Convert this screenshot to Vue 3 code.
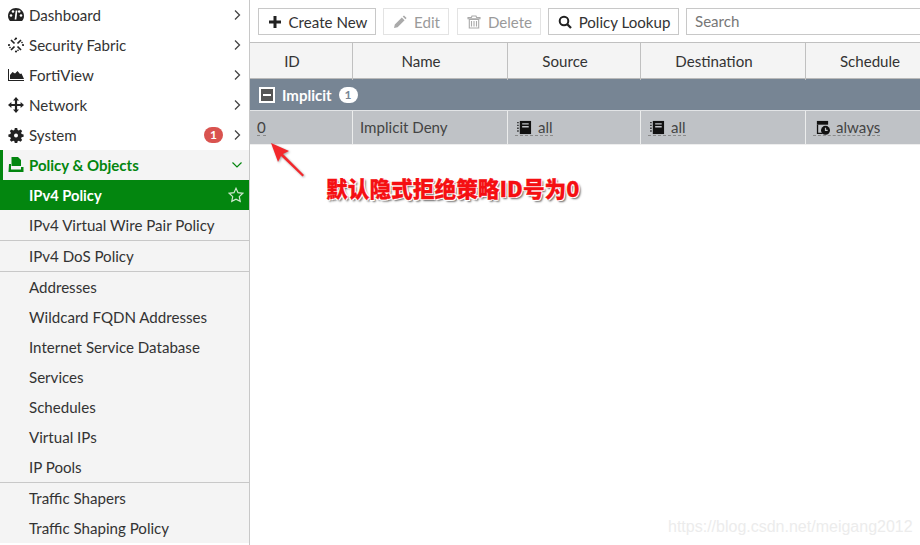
<script setup>
const top = [
  { label: 'Dashboard', icon: 'dash' },
  { label: 'Security Fabric', icon: 'fabric' },
  { label: 'FortiView', icon: 'view' },
  { label: 'Network', icon: 'net' },
  { label: 'System', icon: 'sys', badge: 1 }
]
const groups = [
  ['Addresses', 'Wildcard FQDN Addresses', 'Internet Service Database', 'Services', 'Schedules', 'Virtual IPs', 'IP Pools'],
  ['Traffic Shapers', 'Traffic Shaping Policy']
]
const cols = ['ID', 'Name', 'Source', 'Destination', 'Schedule']
</script>

<template>
  <div class="page">
    <aside class="side">
      <div v-for="t in top" :key="t.label" class="item">
        <svg class="ic" viewBox="0 0 16 16">
          <template v-if="t.icon === 'dash'">
            <path d="M8 1C3.600 1 0 4.500 0 9c0 2 .8 3.900 2 5h12c1.200-1.100 2-3 2-5 0-4.500-3.600-8-8-8z" fill="#222" />
            <circle cx="3" cy="8.500" r="1.300" fill="#fff" /><circle cx="5" cy="4.500" r="1.300" fill="#fff" /><circle cx="11.200" cy="4.500" r="1.300" fill="#fff" /><circle cx="13" cy="8.500" r="1.300" fill="#fff" />
            <path d="M7.500 12.500 L8.500 3.500" stroke="#fff" stroke-width="1.700" />
          </template>
          <template v-else-if="t.icon === 'fabric'">
            <path d="M3 3l3.500 3.500M13 3 9.500 6.500M3 13l3.500-3.500M13 13 9.500 9.500" stroke="#222" stroke-width="1.700" fill="none" />
            <path d="M6.500 2l1 1M9.500 12.800l1 1M1.500 10l1 1M13.500 5l1 1" stroke="#222" stroke-width="1.400" fill="none" />
            <circle cx="8" cy="1.500" r="1.100" fill="#222" /><circle cx="8" cy="14.500" r="1.100" fill="#222" /><circle cx="1" cy="8" r="1.100" fill="#222" /><circle cx="15" cy="8" r="1.100" fill="#222" />
          </template>
          <template v-else-if="t.icon === 'view'">
            <path d="M0 2h1v11h15v1H0z" fill="#222" />
            <path d="M2 12V8l2.500-3L7 6.500 9.500 4 12 7l1.500-.5L16 12z" fill="#222" />
          </template>
          <template v-else-if="t.icon === 'net'">
            <path d="M8 0l3 3.400H9.100v3.500h3.500V5l3.400 3-3.400 3V9.100H9.100v3.500H11L8 16l-3-3.400h1.900V9.100H3.400V11L0 8l3.400-3v1.900h3.500V3.400H5z" fill="#222" />
          </template>
          <template v-else>
            <path d="M6.800 1h2.400l.4 2 1.200.5 1.700-1.100 1.700 1.700-1.100 1.700.5 1.200 2 .4v2.400l-2 .4-.5 1.200 1.100 1.700-1.700 1.700-1.700-1.100-1.200.5-.4 2H6.800l-.4-2-1.200-.5-1.700 1.100-1.700-1.700 1.100-1.700-.5-1.200-2-.4V7.400l2-.4.500-1.200-1.100-1.700 1.700-1.700 1.700 1.100L6.400 3z" fill="#222" />
            <circle cx="8" cy="8.600" r="2" fill="#fff" />
          </template>
        </svg>
        <span class="lbl">{{ t.label }}</span>
        <span v-if="t.badge" class="badge">{{ t.badge }}</span>
        <svg class="chev" viewBox="0 0 8 12"><path d="M2 1.500 6.500 6 2 10.500" fill="none" stroke="#444" stroke-width="1.300" /></svg>
      </div>

      <div class="item section">
        <svg class="ic" viewBox="0 0 16 16">
          <path d="M3.500 0h6.500l3 3v6H3.500z" fill="#03860f" />
          <path d="M1 7h2v5.500h10V10h2.500v5H.5z" fill="#03860f" />
        </svg>
        <span class="lbl">Policy &amp; Objects</span>
        <svg class="chev down" viewBox="0 0 12 8"><path d="M1.500 1.500 6 6l4.500-4.500" fill="none" stroke="#03860f" stroke-width="1.200" /></svg>
      </div>
      <div class="sub active">
        <span class="lbl">IPv4 Policy</span>
        <svg class="star" viewBox="0 0 16 16"><path d="M8 1.300l2 4.400 4.800.6-3.500 3.300.9 4.800L8 12.100l-4.200 2.300.9-4.800L1.200 6.300 6 5.700z" fill="none" stroke="#cfe8d0" stroke-width="1.200" /></svg>
      </div>
      <div class="sub end">IPv4 Virtual Wire Pair Policy</div>
      <div class="sub end">IPv4 DoS Policy</div>
      <div v-for="(g, gi) in groups" :key="gi" class="grp">
        <div v-for="s in g" :key="s" class="sub">{{ s }}</div>
      </div>
    </aside>

    <main class="main">
      <div class="toolbar">
        <button class="btn create">
          <svg class="bi" viewBox="0 0 14 14"><path d="M5.500 1h3v4.500H13v3H8.500V13h-3V8.500H1v-3h4.500z" fill="#222" /></svg>Create New
        </button>
        <button class="btn off edit">
          <svg class="bi" viewBox="0 0 14 14"><path d="M1 13l.8-3.600 7-7 2.800 2.800-7 7zM9.700 1.600 11 .4l2.600 2.600-1.200 1.300z" fill="#aaa" /></svg>Edit
        </button>
        <button class="btn off del">
          <svg class="bi" viewBox="0 0 14 14"><path d="M5 1h4l.6 1.500H13v1.200H1V2.500h3.400zM2.300 4.500h9.400V13H2.300zM4.500 6v5.500M7 6v5.500M9.500 6v5.500" fill="#fff" stroke="#aaa" stroke-width="1.100" /></svg>Delete
        </button>
        <button class="btn look">
          <svg class="bi" viewBox="0 0 14 14"><circle cx="6" cy="6" r="4.300" fill="none" stroke="#222" stroke-width="2" /><path d="M9 9l4 4" stroke="#222" stroke-width="2.300" /></svg>Policy Lookup
        </button>
        <div class="search">Search</div>
      </div>

      <div class="tbl">
        <div class="row head">
          <div v-for="c in cols" :key="c" class="cell">{{ c }}</div>
        </div>
        <div class="group">
          <span class="minus"><i></i></span>
          <span class="gname">Implicit</span>
          <span class="count">1</span>
        </div>
        <div class="row data">
          <div class="cell"><span class="dash">0</span></div>
          <div class="cell">Implicit Deny</div>
          <div class="cell">
            <span class="dash">
              <svg class="ci" viewBox="0 0 16 16"><path d="M3 1h12v14H3z" fill="#111" /><path d="M5.500 3.500h7v1.400h-7zM5.500 6.500h7v1.400h-7z" fill="#bfc2c6" /><path d="M1 2v12" stroke="#111" stroke-width="1.400" stroke-dasharray="1.500 1.500" /></svg>all
            </span>
          </div>
          <div class="cell">
            <span class="dash">
              <svg class="ci" viewBox="0 0 16 16"><path d="M3 1h12v14H3z" fill="#111" /><path d="M5.500 3.500h7v1.400h-7zM5.500 6.500h7v1.400h-7z" fill="#bfc2c6" /><path d="M1 2v12" stroke="#111" stroke-width="1.400" stroke-dasharray="1.500 1.500" /></svg>all
            </span>
          </div>
          <div class="cell">
            <span class="dash">
              <svg class="ci" viewBox="0 0 16 16"><path d="M2 1h12v4H2z" fill="#111" /><path d="M2.700 5v9.300H8" fill="none" stroke="#111" stroke-width="1.400" /><circle cx="11.200" cy="11" r="4.800" fill="#111" /><path d="M11.200 8.300V11h2.300" fill="none" stroke="#bfc2c6" stroke-width="1.300" /></svg>always
            </span>
          </div>
        </div>
      </div>
    </main>

    <svg class="arrow" viewBox="0 0 60 60" width="60" height="60">
      <path fill="#f3282c" d="M1 1 L19 9 L13 12 L34 33 L32.500 34.500 L11 14 L8 20 Z" />
    </svg>
    <div class="note">默认隐式拒绝策略ID号为0</div>
    <div class="mark">https://blog.csdn.net/meigang2012</div>
  </div>
</template>

<style scoped>
.page {
  position: relative;
  width: 920px;
  height: 545px;
  display: flex;
  overflow: hidden;
  background: #fff;
  font-family: Lato, "Noto Sans CJK SC", sans-serif;
  font-size: 15.1px;
  color: #333;
}
.side {
  width: 250px;
  box-sizing: border-box;
  height: 545px;
  flex: none;
  border-right: 1px solid #c8c8c8;
  overflow: hidden;
}
.item {
  height: 30px;
  display: flex;
  align-items: center;
  padding: 0 8px;
  color: #333;
}
.ic {
  width: 16px;
  height: 16px;
  flex: none;
  margin-right: 5px;
}
.lbl { flex: 1; }
.chev {
  width: 8px;
  height: 12px;
  flex: none;
}
.chev.down {
  width: 12px;
  height: 8px;
  margin-right: -2px;
}
.badge {
  width: 19px;
  height: 16px;
  margin-right: 10px;
  border-radius: 8px;
  background: #d9534f;
  color: #fff;
  font-size: 12px;
  font-weight: 700;
  line-height: 16px;
  text-align: center;
}
.section {
  background: #f4f4f4;
  border-left: 3px solid #03860f;
  padding-left: 5px;
  color: #03860f;
  font-weight: 700;
  font-size: 15px;
}
.sub {
  height: 30px;
  line-height: 30px;
  padding-left: 29px;
  background: #f4f4f4;
  white-space: nowrap;
}
.sub.active {
  display: flex;
  align-items: center;
  padding-right: 5px;
  background: #03860f;
  color: #fff;
  font-weight: 700;
  font-size: 14.7px;
}
.star { width: 16px; height: 16px; flex: none; }
.sub.end {
  height: 31px;
  box-sizing: border-box;
  border-bottom: 1px solid #c8c8c8;
}
.grp {
  border-bottom: 1px solid #c8c8c8;
}
.grp:last-child { border-bottom: 0; }
.main {
  flex: 1;
  min-width: 0;
  overflow: hidden;
}
.toolbar {
  height: 42px;
  box-sizing: border-box;
  padding: 8px 0 0 8px;
  display: flex;
  align-items: flex-start;
}
.btn {
  flex: none;
  height: 27px;
  box-sizing: border-box;
  padding: 0 0 0 1px;
  display: flex;
  align-items: center;
  justify-content: center;
  background: #fff;
  border: 1px solid #c8c8c8;
  font: inherit;
  color: #333;
}
.bi { width: 14px; height: 14px; margin-right: 7px; }
.create { width: 118px; margin-right: 7px; }
.edit { width: 66px; margin-right: 8px; }
.del { width: 84px; margin-right: 7px; }
.look { width: 131px; margin-right: 7px; }
.off { border-color: #e3e3e3; color: #9a9a9a; }
.search {
  flex: none;
  width: 260px;
  height: 27px;
  box-sizing: border-box;
  border: 1px solid #c8c8c8;
  padding-left: 8px;
  line-height: 25px;
  color: #777;
}
.tbl { border-top: 1px solid #c0c0c0; }
.row {
  display: grid;
  grid-template-columns: 103px 155px 133px 165px 146px;
}
.head {
  height: 36px;
  background: #f4f4f4;
  border-bottom: 1px solid #b9b9b9;
  box-sizing: border-box;
}
.head .cell {
  line-height: 37px;
  padding-right: 18px;
  text-align: center;
  border-right: 1px solid #c0c0c0;
  color: #333;
}
.head .cell:last-child { border-right: 0; }
.group {
  height: 32px;
  box-sizing: border-box;
  display: flex;
  align-items: center;
  padding-left: 9px;
  background: #778594;
  border-bottom: 1px solid #e2e4e6;
  color: #fff;
  font-weight: 700;
  font-size: 15px;
}
.minus {
  width: 16px;
  height: 16px;
  box-sizing: border-box;
  border: 2px solid #fff;
  background: #555;
  display: flex;
  align-items: center;
  justify-content: center;
  margin-right: 7px;
}
.minus i {
  display: block;
  width: 8px;
  height: 2px;
  background: #fff;
}
.count {
  margin-left: 7px;
  width: 19px;
  height: 16px;
  border-radius: 8px;
  background: #fff;
  color: #778594;
  font-size: 12px;
  line-height: 16px;
  text-align: center;
}
.data {
  height: 33px;
  background: #bfc2c6;
  color: #444;
  border-bottom: 1px solid #eee;
}
.data .cell {
  box-sizing: border-box;
  height: 33px;
  padding-left: 7px;
  line-height: 33px;
  border-right: 1px solid #eceded;
}
.data .cell:last-child { border-right: 0; }
.dash {
  display: flex;
  width: fit-content;
  align-items: flex-start;
  height: 17px;
  margin-top: 7px;
  line-height: 18px;
  border-bottom: 1px dashed #8a8a8a;
}
.ci { flex: none; width: 15px; height: 15px; margin: 2px 6px 0 2px; }
.arrow {
  position: absolute;
  left: 270px;
  top: 142px;
  filter: drop-shadow(1px 1px 1px rgba(0,0,0,.35));
}
.note {
  position: absolute;
  left: 326px;
  top: 175px;
  font-family: "Noto Sans CJK SC", sans-serif;
  font-size: 21.700px;
  line-height: 26px;
  font-weight: 900;
  color: #f50f12;
  -webkit-text-stroke: .3px #f50f12;
  white-space: nowrap;
  text-shadow: 1px 1px 0 #fff, -1px -1px 0 #fff, 1px -1px 0 #fff, -1px 1px 0 #fff, 2px 2px 2px rgba(0,0,0,.6);
}
.mark {
  position: absolute;
  left: 668px;
  top: 517px;
  font-family: "Liberation Sans", sans-serif;
  font-size: 16px;
  line-height: 20px;
  color: #ececec;
  white-space: nowrap;
}
</style>
